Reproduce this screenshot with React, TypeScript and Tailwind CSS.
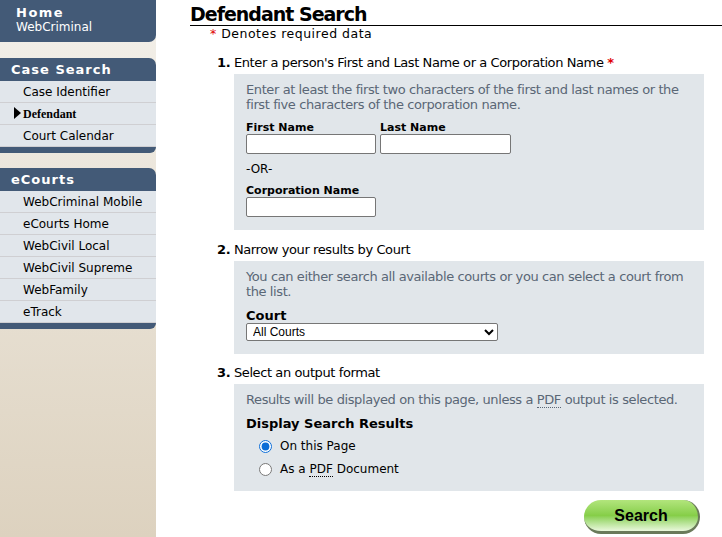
import { useState } from "react";

const CASE_LINKS = ["Case Identifier", "Defendant", "Court Calendar"];
const ECOURTS_LINKS = ["WebCriminal Mobile", "eCourts Home", "WebCivil Local", "WebCivil Supreme", "WebFamily", "eTrack"];

const verdana = { fontFamily: '"DejaVu Sans", Verdana, sans-serif' };
const arial = { fontFamily: '"Liberation Sans", Arial, sans-serif' };

function NavBlock({ title, links, active, className }: { title: string; links: string[]; active?: string; className: string }) {
  return (
    <div className={className}>
      <div className="h-[23px] bg-[#435a77] rounded-tr-[7px] pl-[11px] flex items-center text-white text-[13px] font-bold tracking-[1px]">
        {title}
      </div>
      {links.map((l) => (
        <div
          key={l}
          className="h-[22px] bg-[#e1e6eb] border-b border-[#cfcfd2] last:border-b-0 flex items-center pl-[23px] text-[12px] text-black relative"
        >
          {l === active ? (
            <>
              <span className="absolute left-[14px] top-[4px] w-0 h-0 border-l-[7px] border-l-black border-y-[6px] border-y-transparent" />
              <span className="font-bold text-[12px]" style={{ fontFamily: '"Liberation Serif", serif' }}>{l}</span>
            </>
          ) : (
            l
          )}
        </div>
      ))}
      <div className="h-[6px] bg-[#435a77] rounded-br-[7px]" />
    </div>
  );
}

function Step({ n, children }: { n: number; children: React.ReactNode }) {
  return (
    <div className="ml-[27px] text-[13px] text-black leading-[16px] tracking-[-0.4px]">
      <span className="font-bold">{n}.</span> {children}
    </div>
  );
}

function Panel({ children }: { children: React.ReactNode }) {
  return <div className="ml-[44px] mt-[3px] bg-[#e1e6ea] px-[12px] pt-[8px] pb-[13px]">{children}</div>;
}

function Hint({ children }: { children: React.ReactNode }) {
  return <p className="text-[13px] leading-[15px] text-[#5a6776] tracking-[-0.4px]">{children}</p>;
}

export default function App() {
  const [output, setOutput] = useState("page");
  return (
    <div className="flex min-h-[537px] w-[722px] bg-white" style={verdana}>
      <aside className="w-[156px] shrink-0 bg-gradient-to-b from-[#f3f0ea] to-[#ddd2bf]">
        <div className="h-[42px] bg-[#435a77] rounded-br-[7px] pl-[16px] pt-[5px] text-white">
          <div className="text-[13px] font-bold tracking-[1.5px] leading-[15px]">Home</div>
          <div className="text-[12px] leading-[14px]">WebCriminal</div>
        </div>
        <NavBlock className="mt-[16px]" title="Case Search" links={CASE_LINKS} active="Defendant" />
        <NavBlock className="mt-[15px]" title="eCourts" links={ECOURTS_LINKS} />
      </aside>

      <main className="flex-1 pl-[34px]">
        <h1 className="text-[19px] font-bold leading-[22px] pt-[3px] border-b border-black tracking-[-1px]">
          Defendant Search
        </h1>
        <p className="ml-[20px] mt-[1px] text-[12.5px] leading-[14px] tracking-[0.5px]">
          <span className="text-[#e00000]">*</span> Denotes required data
        </p>

        <div className="mt-[14px] mr-[18px]">
          <Step n={1}>
            Enter a person's First and Last Name or a Corporation Name <span className="text-[#e00000] font-bold">*</span>
          </Step>
          <Panel>
            <Hint>
              Enter at least the first two characters of the first and last names or the first five characters of the corporation name.
            </Hint>
            <div className="flex gap-[4px] mt-[9px]">
              <label className="block">
                <span className="block text-[11px] font-bold leading-[13px]">First Name</span>
                <input className="block w-[130px] h-[20px] bg-white border border-[#767676] rounded-[2px]" />
              </label>
              <label className="block">
                <span className="block text-[11px] font-bold leading-[13px]">Last Name</span>
                <input className="block w-[131px] h-[20px] bg-white border border-[#767676] rounded-[2px]" />
              </label>
            </div>
            <div className="text-[12px] mt-[8px] leading-[14px]">-OR-</div>
            <label className="block mt-[8px]">
              <span className="block text-[11px] font-bold leading-[13px]">Corporation Name</span>
              <input className="block w-[130px] h-[20px] bg-white border border-[#767676] rounded-[2px]" />
            </label>
          </Panel>
        </div>

        <div className="mt-[12px] mr-[18px]">
          <Step n={2}>Narrow your results by Court</Step>
          <Panel>
            <Hint>You can either search all available courts or you can select a court from the list.</Hint>
            <div className="text-[13px] font-bold leading-[15px] mt-[9px]">Court</div>
            <select
              className="block w-[252px] h-[18px] bg-white border border-[#767676] rounded-[2px] text-[12px] pl-[2px]"
              style={arial}
              defaultValue="all"
            >
              <option value="all">All Courts</option>
            </select>
          </Panel>
        </div>

        <div className="mt-[11px] mr-[18px]">
          <Step n={3}>Select an output format</Step>
          <Panel>
            <Hint>
              Results will be displayed on this page, unless a{" "}
              <abbr className="no-underline border-b border-dotted border-[#5a6776]">PDF</abbr> output is selected.
            </Hint>
            <div className="text-[13px] font-bold leading-[15px] mt-[9px]">Display Search Results</div>
            <label className="flex items-center gap-[8px] ml-[13px] mt-[6px] text-[12px] leading-[18px]">
              <input
                type="radio"
                name="out"
                checked={output === "page"}
                onChange={() => setOutput("page")}
                className="m-0 w-[13px] h-[13px] accent-[#0a6cd6]"
              />
              On this Page
            </label>
            <label className="flex items-center gap-[8px] ml-[13px] mt-[5px] text-[12px] leading-[18px]">
              <input
                type="radio"
                name="out"
                checked={output === "pdf"}
                onChange={() => setOutput("pdf")}
                className="m-0 w-[13px] h-[13px]"
              />
              <span>
                As a <abbr className="no-underline border-b border-dotted border-black">PDF</abbr> Document
              </span>
            </label>
          </Panel>
        </div>

        <div className="flex justify-end mr-[22px] mt-[9px]">
          <button
            className="w-[116px] h-[34px] rounded-full bg-gradient-to-b from-[#b2e57c] via-[#86ce48] to-[#eaf8dc] border-b-[3px] border-r-[2px] border-[#6a7a5a] text-[16px] font-bold text-black"
            style={arial}
          >
            Search
          </button>
        </div>
      </main>
    </div>
  );
}
